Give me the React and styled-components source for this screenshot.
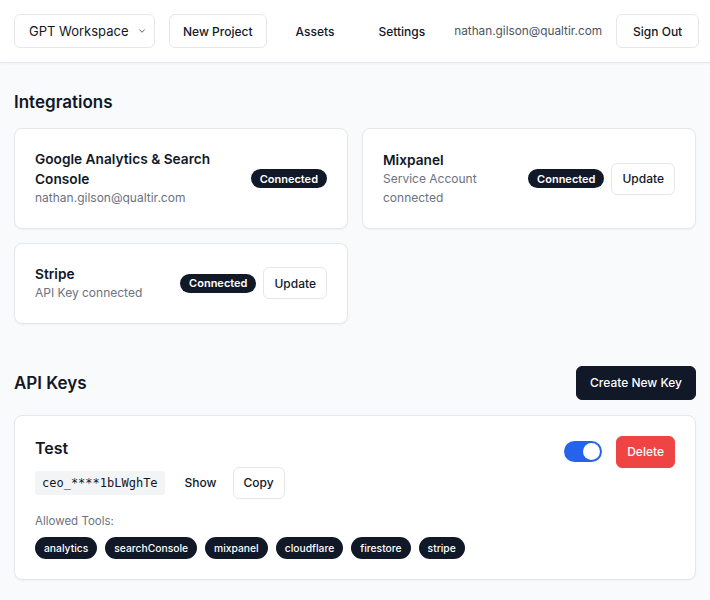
import React, { useState } from 'react';
import styled, { createGlobalStyle } from 'styled-components';

const GlobalStyle = createGlobalStyle`
  * { box-sizing: border-box; }
  body {
    margin: 0;
    background: #f9fafb;
    color: #111827;
    font-family: Inter, "Noto Sans", sans-serif;
  }
`;

const Header = styled.header`
  display: flex;
  align-items: center;
  gap: 14px;
  height: 63px;
  padding: 0 14px;
  background: #fff;
  border-bottom: 1px solid #e5e7eb;
  box-shadow: 0 1px 2px rgba(0, 0, 0, 0.04);
`;

const SelectBox = styled.div`
  display: flex;
  align-items: center;
  justify-content: space-between;
  flex: 0 0 141px;
  height: 34px;
  padding: 0 7px 0 14px;
  border: 1px solid #e5e7eb;
  border-radius: 6px;
  font-size: 13px;
  white-space: nowrap;
  background: #fff;
`;

const Button = styled.button`
  height: ${(p) => (p.$tall ? '34px' : '32px')};
  padding: 0 ${(p) => (p.$pad ? p.$pad : 13)}px;
  border-radius: 6px;
  border: 1px solid ${(p) => (p.$variant === 'ghost' ? 'transparent' : p.$variant === 'danger' ? '#ef4444' : p.$variant === 'dark' ? '#111827' : '#e5e7eb')};
  background: ${(p) => (p.$variant === 'danger' ? '#ef4444' : p.$variant === 'dark' ? '#111827' : p.$variant === 'ghost' ? 'transparent' : '#fff')};
  color: ${(p) => (p.$variant === 'danger' || p.$variant === 'dark' ? '#fff' : '#111827')};
  font-family: inherit;
  font-size: 12px;
  font-weight: 500;
  cursor: pointer;
  flex-shrink: 0;
  white-space: nowrap;
`;

const Email = styled.span`
  font-size: 11.8px;
  color: #4b5563;
  white-space: nowrap;
`;

const Main = styled.main`
  padding: 25px 14px 20px;
`;

const SectionRow = styled.div`
  display: flex;
  align-items: center;
  justify-content: space-between;
  margin-top: ${(p) => p.$top || 0}px;
  margin-bottom: ${(p) => p.$bottom || 12}px;
`;

const Heading = styled.h2`
  margin: 0;
  font-size: 17px;
  font-weight: 600;
  line-height: 28px;
`;

const Grid = styled.div`
  display: grid;
  grid-template-columns: 1fr 1fr;
  gap: 14px;
  align-items: start;
`;

const Card = styled.div`
  background: #fff;
  border: 1px solid #e5e7eb;
  border-radius: 8px;
  box-shadow: 0 1px 2px rgba(0, 0, 0, 0.04);
  padding: 20px;
`;

const IntegrationCard = styled(Card)`
  display: flex;
  align-items: center;
  justify-content: space-between;
  gap: 12px;
  min-height: ${(p) => p.$minH || 0}px;
`;

const Info = styled.div`
  flex: 1;
  min-width: 0;
`;

const Title = styled.div`
  font-size: 13.7px;
  font-weight: 600;
  line-height: 20px;
`;

const Sub = styled.div`
  font-size: 12px;
  line-height: 18.5px;
  color: #6b7280;
`;

const Actions = styled.div`
  display: flex;
  align-items: center;
  gap: 7px;
  flex-shrink: 0;
`;

const Pill = styled.span`
  display: inline-flex;
  align-items: center;
  height: ${(p) => p.$h || 19}px;
  padding: 0 ${(p) => p.$px || 9}px;
  border-radius: 999px;
  background: #111827;
  color: #fff;
  font-size: ${(p) => p.$size || 11}px;
  font-weight: ${(p) => p.$weight || 600};
  white-space: nowrap;
`;

const KeyTop = styled.div`
  display: flex;
  justify-content: space-between;
  align-items: flex-start;
`;

const KeyTitle = styled.div`
  font-size: 16px;
  font-weight: 600;
  line-height: 24px;
`;

const KeyRow = styled.div`
  display: flex;
  align-items: center;
  gap: 3px;
  margin-top: 7px;
`;

const Code = styled.code`
  background: #f3f4f6;
  border-radius: 4px;
  padding: 0 7px;
  height: 24px;
  display: inline-flex;
  align-items: center;
  font-family: "DejaVu Sans Mono", "Liberation Mono", monospace;
  font-size: 12px;
  color: #111827;
  margin-right: 4px;
`;

const RightControls = styled.div`
  display: flex;
  align-items: center;
  gap: 14px;
`;

const Toggle = styled.button`
  position: relative;
  width: 38px;
  height: 21px;
  border-radius: 999px;
  border: none;
  padding: 0;
  background: ${(p) => (p.$on ? '#2563eb' : '#d1d5db')};
  cursor: pointer;

  &::after {
    content: '';
    position: absolute;
    top: 2px;
    left: ${(p) => (p.$on ? '19px' : '2px')};
    width: 17px;
    height: 17px;
    border-radius: 50%;
    background: #fff;
  }
`;

const ToolsLabel = styled.div`
  margin-top: 14px;
  font-size: 11.5px;
  line-height: 16px;
  color: #6b7280;
`;

const Tags = styled.div`
  display: flex;
  flex-wrap: wrap;
  gap: 8px;
  margin-top: 8px;
`;

const Chevron = () => (
  <svg width="10" height="10" viewBox="0 0 24 24" fill="none" stroke="#374151" strokeWidth="2" strokeLinecap="round" strokeLinejoin="round">
    <path d="m6 9 6 6 6-6" />
  </svg>
);

const tools = ['analytics', 'searchConsole', 'mixpanel', 'cloudflare', 'firestore', 'stripe'];

export default function App() {
  const [enabled, setEnabled] = useState(true);

  return (
    <>
      <GlobalStyle />
      <Header>
        <SelectBox>
          <span>GPT Workspace</span>
          <Chevron />
        </SelectBox>
        <Button $tall $pad={13}>New Project</Button>
        <Button $tall $pad={14} $variant="ghost">Assets</Button>
        <Button $tall $pad={14} $variant="ghost">Settings</Button>
        <Email>nathan.gilson@qualtir.com</Email>
        <Button $tall $pad={16}>Sign Out</Button>
      </Header>

      <Main>
        <SectionRow>
          <Heading>Integrations</Heading>
        </SectionRow>
        <Grid>
          <IntegrationCard $minH={101}>
            <Info>
              <Title>Google Analytics &amp; Search Console</Title>
              <Sub>nathan.gilson@qualtir.com</Sub>
            </Info>
            <Actions>
              <Pill>Connected</Pill>
            </Actions>
          </IntegrationCard>
          <IntegrationCard $minH={101}>
            <Info>
              <Title>Mixpanel</Title>
              <Sub>Service Account connected</Sub>
            </Info>
            <Actions>
              <Pill>Connected</Pill>
              <Button $pad={10}>Update</Button>
            </Actions>
          </IntegrationCard>
          <IntegrationCard>
            <Info>
              <Title>Stripe</Title>
              <Sub>API Key connected</Sub>
            </Info>
            <Actions>
              <Pill>Connected</Pill>
              <Button $pad={10}>Update</Button>
            </Actions>
          </IntegrationCard>
        </Grid>

        <SectionRow $top={42} $bottom={15}>
          <Heading>API Keys</Heading>
          <Button $tall $pad={13} $variant="dark">Create New Key</Button>
        </SectionRow>
        <Card>
          <KeyTop>
            <div>
              <KeyTitle>Test</KeyTitle>
              <KeyRow>
                <Code>ceo_****1bLWghTe</Code>
                <Button $variant="ghost" $pad={12}>Show</Button>
                <Button $pad={10}>Copy</Button>
              </KeyRow>
            </div>
            <RightControls>
              <Toggle $on={enabled} onClick={() => setEnabled(!enabled)} aria-label="Toggle key" />
              <Button $variant="danger" $pad={10}>Delete</Button>
            </RightControls>
          </KeyTop>
          <ToolsLabel>Allowed Tools:</ToolsLabel>
          <Tags>
            {tools.map((t) => (
              <Pill key={t} $h={22} $px={9} $size={10.3} $weight={500}>{t}</Pill>
            ))}
          </Tags>
        </Card>
      </Main>
    </>
  );
}
